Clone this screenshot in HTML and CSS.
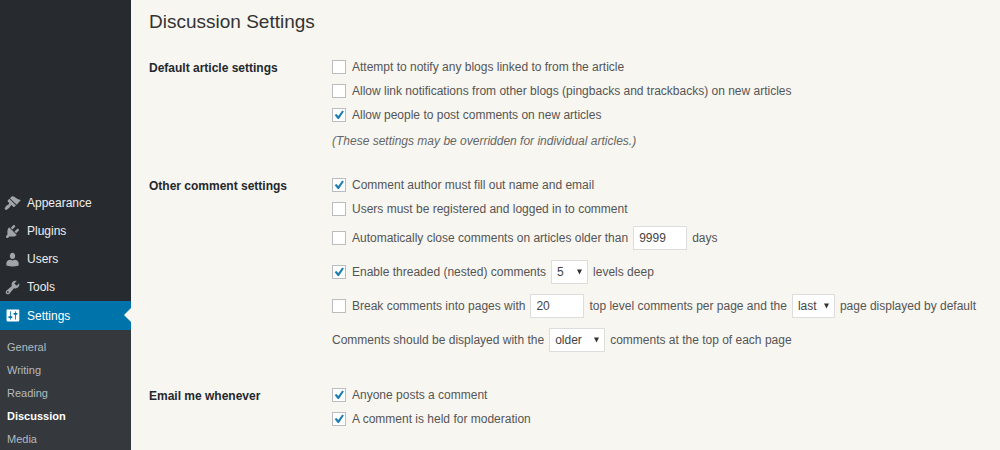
FILE: index.html
```html
<!DOCTYPE html>
<html lang="en">
   <head>
      <meta charset="utf-8">
      <title>Discussion Settings</title>
      <meta name="viewport" content="width=device-width, initial-scale=1">
      <link rel="stylesheet" href="styles.css">
   </head>
   <body>
      <nav class="sidebar">
         <ul class="menu">
            <li>
               <a href="#">
                  <svg viewBox="0 0 20 20"><path d="M14.9 11.5L7 3.7l1.9-1.9c.6-.5 2.5-.2 3.7.5 1.2.8 1.6 1.3 3 2 1.2.7 2.4 1.2 4.2 1.5zm-.8.8L6.3 4.500 4.600 6.200c-.5.5-.5 1.200 0 1.700l1.200 1.200c.4.4.4 1 0 1.400-.6.600-1.430 1.110-2.210 1.690-.350.260-.700.530-1.010.840C1.200 14.400.2 16.200 1.300 17.200c1.100 1 2.900-.1 4.280-1.490.310-.310.580-.660.850-1.020.570-.780 1.080-1.610 1.690-2.210.390-.390 1.020-.390 1.410 0l1.200 1.200c.4.4 1.100.4 1.500 0z"/></svg>
                  Appearance
               </a>
            </li>
            <li>
               <a href="#">
                  <svg viewBox="0 0 20 20"><path d="M13.11 4.36L9.87 7.6 8 5.73l3.24-3.24c.35-.34 1.05-.2 1.56.32.52.51.66 1.21.31 1.55zm-8 1.77l.91-1.12 9.01 9.01-1.19.84c-.71.71-2.63 1.16-3.82 1.16H6.14L4.9 17.26c-.59.59-1.54.59-2.12 0-.59-.58-.59-1.53 0-2.12l1.24-1.24v-3.88c0-1.13.4-3.19 1.09-3.89zm7.26 3.97l3.24-3.24c.34-.35 1.04-.21 1.55.31.52.51.66 1.21.31 1.55l-3.24 3.25z"/></svg>
                  Plugins
               </a>
            </li>
            <li>
               <a href="#">
                  <svg viewBox="0 0 20 20"><path d="M10 9.4c-2.4 0-3.1-2.200-3.100-3.600C6.900 3.700 8.100 2 10 2s3.100 1.700 3.100 3.800c0 1.400-.7 3.600-3.100 3.600zm0 1.700L12.300 10.400c2.900 0 4.940 2 4.940 4.130v2.490s-3.650 1.130-7.240 1.130c-3.650 0-7.240-1.130-7.240-1.130v-2.490c0-2.250 2.040-4.130 4.940-4.130z"/></svg>
                  Users
               </a>
            </li>
            <li>
               <a href="#">
                  <svg viewBox="0 0 20 20"><path d="M16.68 9.77c-1.34 1.34-3.3 1.67-4.95.99l-5.41 6.52c-.99.99-2.59.99-3.58 0s-.99-2.59 0-3.57l6.52-5.42c-.68-1.65-.35-3.61.99-4.95 1.28-1.28 3.12-1.62 4.72-1.06l-2.89 2.89 2.82 2.82 2.86-2.87c.53 1.58.18 3.39-1.08 4.65zM3.81 16.21c.4.39 1.04.39 1.43 0 .4-.4.4-1.04 0-1.43-.39-.4-1.03-.4-1.43 0-.39.39-.39 1.03 0 1.43z"/></svg>
                  Tools
               </a>
            </li>
            <li class="current">
               <a href="#">
                  <svg viewBox="0 0 20 20"><path d="M18 16V4c0-.55-.45-1-1-1H4c-.55 0-1 .45-1 1v12c0 .55.45 1 1 1h13c.55 0 1-.45 1-1zM8 11h1c.55 0 1 .45 1 1s-.45 1-1 1H8v1.5c0 .28-.22.5-.5.5s-.5-.22-.5-.5V13H6c-.55 0-1-.45-1-1s.45-1 1-1h1V5.5c0-.28.22-.5.5-.5s.5.22.5.5V11zm5-2h-1c-.55 0-1-.45-1-1s.45-1 1-1h1V5.5c0-.28.22-.5.5-.5s.5.22.5.5V7h1c.55 0 1 .45 1 1s-.45 1-1 1h-1v5.5c0 .28-.22.5-.5.5s-.5-.22-.5-.5V9z"/></svg>
                  Settings
               </a>
            </li>
         </ul>
         <ul class="submenu">
            <li><a href="#">General</a></li>
            <li><a href="#">Writing</a></li>
            <li><a href="#">Reading</a></li>
            <li><a href="#" class="active">Discussion</a></li>
            <li><a href="#">Media</a></li>
         </ul>
      </nav>
      <main class="content">
         <h1>Discussion Settings</h1>
         <form>
            <section class="group">
               <h2>Default article settings</h2>
               <div class="fields">
                  <div class="row">
                     <input type="checkbox" id="pingback_flag">
                     <label for="pingback_flag">Attempt to notify any blogs linked to from the article</label>
                  </div>
                  <div class="row">
                     <input type="checkbox" id="ping_status">
                     <label for="ping_status">Allow link notifications from other blogs (pingbacks and trackbacks) on new articles</label>
                  </div>
                  <div class="row">
                     <input type="checkbox" id="comment_status" checked>
                     <label for="comment_status">Allow people to post comments on new articles</label>
                  </div>
                  <p class="description">(These settings may be overridden for individual articles.)</p>
               </div>
            </section>
            <section class="group">
               <h2>Other comment settings</h2>
               <div class="fields spaced">
                  <div class="row">
                     <input type="checkbox" id="require_name_email" checked>
                     <label for="require_name_email">Comment author must fill out name and email</label>
                  </div>
                  <div class="row">
                     <input type="checkbox" id="comment_registration">
                     <label for="comment_registration">Users must be registered and logged in to comment</label>
                  </div>
                  <div class="row tall">
                     <input type="checkbox" id="close_comments">
                     <label for="close_comments">Automatically close comments on articles older than</label>
                     <input type="text" id="close_days" value="9999" aria-label="Days before closing">
                     <label for="close_days">days</label>
                  </div>
                  <div class="row tall">
                     <input type="checkbox" id="thread_comments" checked>
                     <label for="thread_comments">Enable threaded (nested) comments</label>
                     <select id="thread_depth" class="depth" aria-label="Thread depth">
                        <option>2</option>
                        <option>3</option>
                        <option>4</option>
                        <option selected>5</option>
                     </select>
                     <label for="thread_depth">levels deep</label>
                  </div>
                  <div class="row tall">
                     <input type="checkbox" id="page_comments">
                     <label for="page_comments">Break comments into pages with</label>
                     <input type="text" id="per_page" value="20" aria-label="Comments per page">
                     <label for="per_page">top level comments per page and the</label>
                     <select id="default_page" class="page" aria-label="Default page">
                        <option>first</option>
                        <option selected>last</option>
                     </select>
                     <label for="default_page">page displayed by default</label>
                  </div>
                  <div class="row tall">
                     <label for="comment_order">Comments should be displayed with the</label>
                     <select id="comment_order" class="order">
                        <option selected>older</option>
                        <option>newer</option>
                     </select>
                     <label for="comment_order">comments at the top of each page</label>
                  </div>
               </div>
            </section>
            <section class="group">
               <h2>Email me whenever</h2>
               <div class="fields">
                  <div class="row">
                     <input type="checkbox" id="comments_notify" checked>
                     <label for="comments_notify">Anyone posts a comment</label>
                  </div>
                  <div class="row">
                     <input type="checkbox" id="moderation_notify" checked>
                     <label for="moderation_notify">A comment is held for moderation</label>
                  </div>
               </div>
            </section>
         </form>
      </main>
   </body>
</html>
```
FILE: styles.css
```css
*{
    box-sizing: border-box;
}
body{
    display: flex;
    min-height: 100vh;
    margin: 0;
    background: #f7f6f1;
    color: #555;
    font-family: "Liberation Sans", Arial, sans-serif;
    font-size: 12px;
    line-height: 16px;
}
ul{
    margin: 0;
    padding: 0;
    list-style: none;
}
a{
    text-decoration: none;
}

/* sidebar */
.sidebar{
    position: sticky;
    top: 0;
    flex: 0 0 131px;
    display: flex;
    flex-direction: column;
    height: 100vh;
    padding-top: 189px;
    overflow: hidden;
    background: #272b2f;
}
.menu a{
    display: flex;
    align-items: center;
    gap: 6px;
    height: 28px;
    padding-left: 4px;
    color: #eee;
}
.menu svg{
    width: 17px;
    height: 17px;
    fill: #a0a5aa;
}
.menu .current a{
    position: relative;
    height: 29px;
    background: #0073aa;
    color: #fff;
}
.menu .current svg{
    fill: #fff;
}
.menu .current a::after{
    content: "";
    position: absolute;
    right: 0;
    top: 7px;
    border: 7px solid transparent;
    border-left-width: 0;
    border-right-color: #f7f6f1;
}
.submenu{
    flex: 1;
    padding-top: 6px;
    background: #35393e;
}
.submenu a{
    display: block;
    padding-left: 7px;
    line-height: 23px;
    font-size: 11px;
    color: #b4b9be;
}
.submenu .active{
    color: #fff;
    font-weight: 700;
}

/* settings form */
.content{
    flex: 1;
    padding: 10px 18px 0;
}
h1{
    margin: 0 0 21px;
    font-size: 19px;
    font-weight: 400;
    line-height: 24px;
    color: #333;
}
.group{
    display: grid;
    grid-template-columns: 183px 1fr;
    margin-bottom: 18px;
}
.group:last-child{
    margin-bottom: 0;
}
h2{
    margin: 0;
    font-size: 12px;
    line-height: 26px;
    color: #23282d;
}
.spaced{
    padding-bottom: 8px;
}
.row{
    display: flex;
    align-items: center;
    height: 24px;
    white-space: nowrap;
}
.row.tall{
    height: 34px;
}
.description{
    margin: 0;
    line-height: 28px;
    font-style: italic;
    color: #666;
}
input, select{
    margin: 0;
    border: 1px solid #ddd;
    border-radius: 0;
    background: #fff;
    color: #444;
    font: inherit;
    appearance: none;
}
input[type=checkbox]{
    width: 14px;
    height: 14px;
    margin-right: 6px;
    border-color: #b9bdc0;
}
input[type=checkbox]:checked{
    background: #fff url("data:image/svg+xml,%3Csvg xmlns='http://www.w3.org/2000/svg' viewBox='0 0 12 12'%3E%3Cpath d='M1.6 6l1.900-1.100 1.800 2.200L9.200 1.500l1.700.9L6 10H4.700z' fill='%231e80b0'/%3E%3C/svg%3E") center / 12px 12px no-repeat;
}
input[type=text]{
    width: 54px;
    height: 24px;
    margin: 0 5px;
    padding: 0 5px;
}
select{
    height: 24px;
    margin: 0 5px;
    padding: 0 5px;
    background: #fff url("data:image/svg+xml,%3Csvg xmlns='http://www.w3.org/2000/svg' viewBox='0 0 6 6'%3E%3Cpath d='M0 0h6L3 6z' fill='%23333'/%3E%3C/svg%3E") right 5px center / 5px 6px no-repeat;
}
.depth{
    width: 37px;
}
.page{
    width: 43px;
}
.order{
    width: 56px;
}
```
